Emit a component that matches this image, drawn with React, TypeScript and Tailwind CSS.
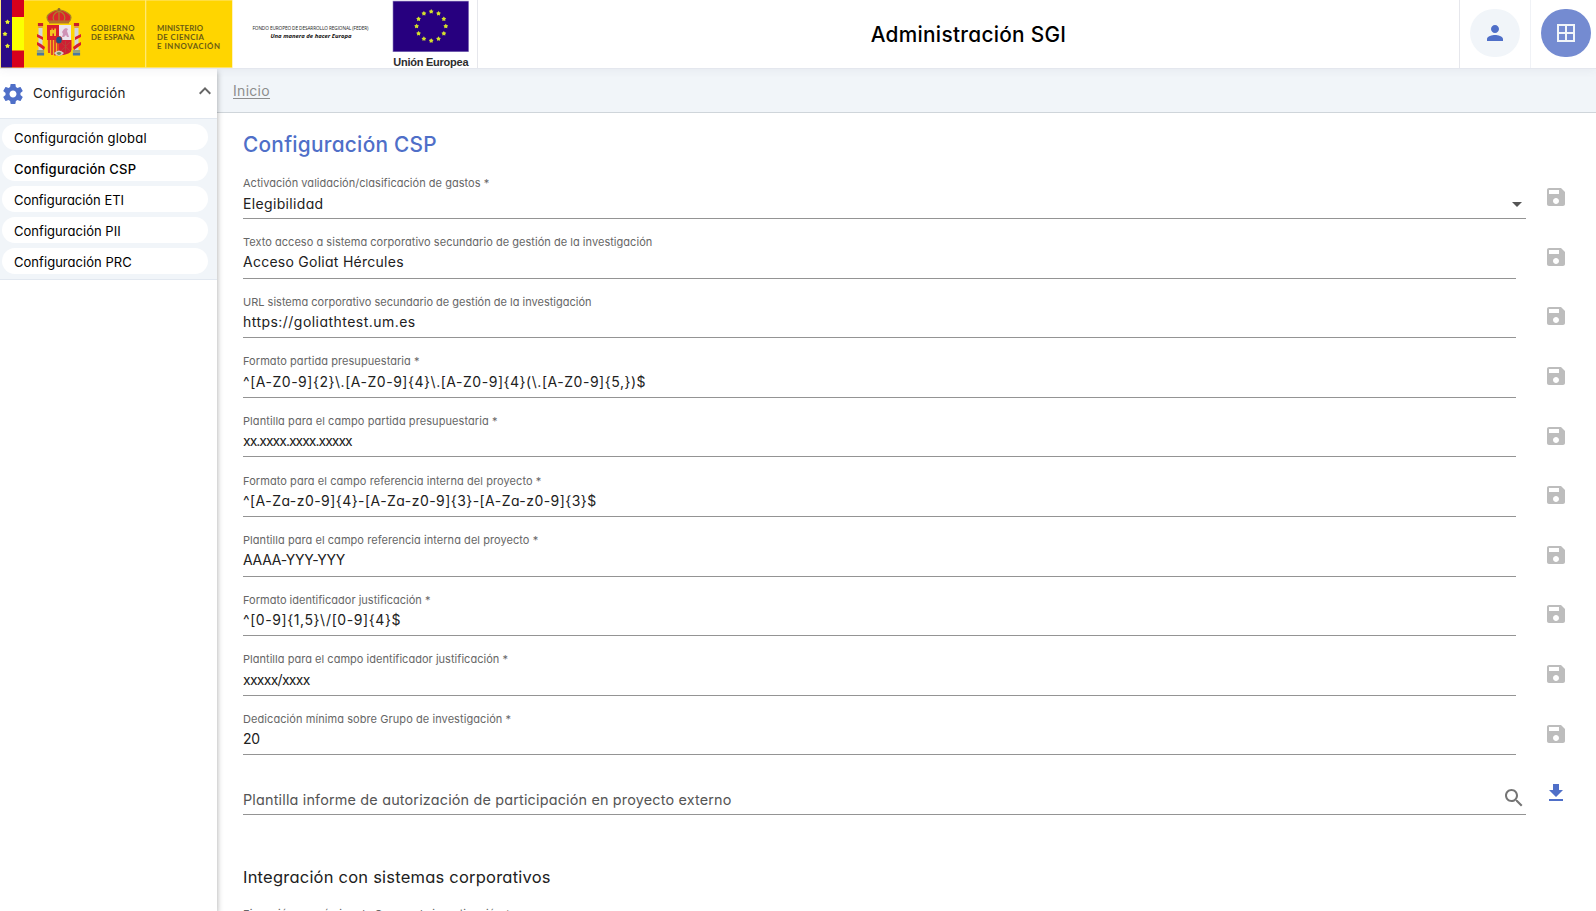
import type { ReactNode } from "react";

const PATHS = {
  settings:
    "M19.43 12.98c.04-.32.07-.64.07-.98s-.03-.66-.07-.98l2.11-1.65c.19-.15.24-.42.12-.64l-2-3.46c-.12-.22-.39-.3-.61-.22l-2.49 1c-.52-.4-1.08-.73-1.69-.98l-.38-2.65C14.46 2.18 14.25 2 14 2h-4c-.25 0-.46.18-.49.42l-.38 2.65c-.61.25-1.17.59-1.69.98l-2.49-1c-.23-.09-.49 0-.61.22l-2 3.46c-.13.22-.07.49.12.64l2.11 1.65c-.04.32-.07.65-.07.98s.03.66.07.98l-2.11 1.65c-.19.15-.24.42-.12.64l2 3.46c.12.22.39.3.61.22l2.49-1c.52.4 1.08.73 1.69.98l.38 2.65c.03.24.24.42.49.42h4c.25 0 .46-.18.49-.42l.38-2.65c.61-.25 1.17-.59 1.69-.98l2.49 1c.23.09.49 0 .61-.22l2-3.46c.12-.22.07-.49-.12-.64l-2.11-1.65zM12 15.5c-1.93 0-3.5-1.57-3.5-3.5s1.57-3.5 3.5-3.5 3.5 1.57 3.5 3.5-1.57 3.5-3.5 3.5z",
  expandLess: "M12 8l-6 6 1.41 1.41L12 10.83l4.59 4.58L18 14z",
  person:
    "M12 12c2.21 0 4-1.79 4-4s-1.79-4-4-4-4 1.79-4 4 1.79 4 4 4zm0 2c-2.67 0-8 1.34-8 4v2h16v-2c0-2.66-5.33-4-8-4z",
  borderAll:
    "M3 3v18h18V3H3zm8 16H5v-6h6v6zm0-8H5V5h6v6zm8 8h-6v-6h6v6zm0-8h-6V5h6v6z",
  save: "M17 3H5c-1.11 0-2 .9-2 2v14c0 1.1.89 2 2 2h14c1.1 0 2-.9 2-2V7l-4-4zm-5 16c-1.66 0-3-1.34-3-3s1.34-3 3-3 3 1.34 3 3-1.34 3-3 3zm3-10H5V5h10v4z",
  search:
    "M15.5 14h-.79l-.28-.27C15.41 12.59 16 11.11 16 9.5 16 5.91 13.09 3 9.5 3S3 5.91 3 9.5 5.91 16 9.5 16c1.61 0 3.09-.59 4.23-1.57l.27.28v.79l5 4.99L20.49 19l-4.99-5zm-6 0C7.01 14 5 11.99 5 9.5S7.01 5 9.5 5 14 7.01 14 9.5 11.99 14 9.5 14z",
  download: "M19 9h-4V3H9v6H5l7 7 7-7zM5 18v2h14v-2H5z",
};

function Icon({ name, className }: { name: keyof typeof PATHS; className: string }) {
  return (
    <svg viewBox="0 0 24 24" className={`size-6 shrink-0 fill-current ${className}`}>
      <path d={PATHS[name]} />
    </svg>
  );
}

function CoatOfArms() {
  return (
    <g>
      {/* pillars */}
      {[38.5, 74.5].map((x) => (
        <g key={x}>
          <rect x={x - 0.6} y="23" width="5.2" height="3" fill="#c8202a" />
          <rect x={x - 0.3} y="26" width="4.6" height="2" fill="#e8a33c" />
          <rect x={x} y="28" width="4" height="22" fill="#d3d3dc" />
          <rect x={x - 1.6} y="50" width="7.2" height="3" fill="#9aa47a" />
          <rect x={x - 1.6} y="53" width="7.2" height="2.5" fill="#4b78a0" />
        </g>
      ))}
      <path d="M37 34l6 3v3l-6-3zM37 42l4 2 4 3-1 3-7-5z" fill="#d81f2c" />
      <path d="M81 34l-6 3v3l6-3zM81 42l-4 2-4 3 1 3 7-5z" fill="#d81f2c" />
      {/* crown */}
      <path d="M49 22q-4-5 0-8 5-4 10-4t10 4q4 3 0 8z" fill="#d9262c" />
      <path d="M49 22q-4-5 0-8 5-4 10-4t10 4q4 3 0 8M54 21q-3-7 5-10M64 21q3-7-5-10M59 8v13" fill="none" stroke="#a8842a" strokeWidth="1.2" />
      <rect x="49" y="20.5" width="20" height="3" fill="#b5702c" />
      <circle cx="59" cy="9.5" r="1.5" fill="#8d6a2f" />
      {/* shield */}
      <path d="M47 25h12v15H47z" fill="#d9202c" />
      <path d="M59 25h12v15H59z" fill="#ece4ee" />
      <path d="M47 40h12v15.5q-12-1-12-6z" fill="#f3b71e" />
      <path d="M59 40h12.500v9.500q0 5-12.500 6z" fill="#cf1f33" />
      <path d="M50 36v-6h1.500v-1.500h1.200V30h1.500v-1.500H56V36h-2v-2.500h-1.500V36z" fill="#f5c51f" />
      <path d="M62 37l1-3-1-2 2-3 2-1 2 1-1 2 1 3 1 3h-2l-1-2-2 2z" fill="#cf93b6" />
      <path d="M49 40v13M52 40v15M55 40v15.500M58 40v15.500" stroke="#d9202c" strokeWidth="1.500" />
      <path d="M61 42l9 9M70 42l-9 9M65.500 41v12" stroke="#b8443a" strokeWidth=".8" />
      <path d="M54 53q5-5 10 0-2 3-5 3t-5-3z" fill="#d8cfc4" />
      <path d="M56.500 53q2.500-2 5 0-1 2-2.500 2t-2.500-2z" fill="#6d8b5a" />
      <ellipse cx="59" cy="40" rx="3.400" ry="4" fill="#c0392b" />
      <ellipse cx="59" cy="40" rx="2.700" ry="3.300" fill="#1d4f86" />
    </g>
  );
}

function Star({ x, y, r, fill }: { x: number; y: number; r: number; fill: string }) {
  const points = Array.from({ length: 10 }, (_, i) => {
    const a = (Math.PI / 5) * i - Math.PI / 2;
    const k = i % 2 ? r * 0.6 : r;
    return `${x + k * Math.cos(a)},${y + k * Math.sin(a)}`;
  }).join(" ");
  return <polygon points={points} fill={fill} />;
}

function GovernmentLogo() {
  const text = { fontFamily: "Lato, sans-serif", fontWeight: 700, fontSize: 7.8, fill: "#6b5b14" };
  return (
    <svg width="233" height="68" viewBox="0 0 233 68" className="shrink-0">
      <rect x="0" width="232.500" height="68" fill="#ffe680" />
      <rect x="1" y=".5" width="231" height="66.700" fill="#ffd500" />
      <rect x="1" y="0" width="11" height="67.500" fill="#2c0b87" />
      <rect x="12" y="0" width="12" height="67.500" fill="#d6001c" />
      <rect x="12" y="17" width="12" height="33.500" fill="#fbff00" />
      <Star x={7.5} y={22} r={2.6} fill="#e8ef30" />
      <Star x={5} y={34} r={2.6} fill="#e8ef30" />
      <Star x={7.5} y={46} r={2.6} fill="#e8ef30" />
      <rect x="145" width="1.300" height="68" fill="#ffe871" />
      <CoatOfArms />
      <g {...text}>
        <text x="91" y="31" textLength="43.500">GOBIERNO</text>
        <text x="91" y="40" textLength="43.500">DE ESPAÑA</text>
        <text x="157" y="31" textLength="46">MINISTERIO</text>
        <text x="157" y="40" textLength="47">DE CIENCIA</text>
        <text x="157" y="49" textLength="63">E INNOVACIÓN</text>
      </g>
    </svg>
  );
}

function EuropeLogo() {
  return (
    <svg width="244" height="69" viewBox="233 0 244 69" className="shrink-0">
      <text x="252.500" y="30.300" textLength="116" fontFamily="Open Sans, sans-serif" fontSize="4.700" fill="#222">
        FONDO EUROPEO DE DESARROLLO REGIONAL (FEDER)
      </text>
      <text x="270.500" y="37.500" textLength="81" fontFamily="Open Sans, sans-serif" fontSize="5.900" fontWeight="700" fontStyle="italic" fill="#111">
        Una manera de hacer Europa
      </text>
      <rect x="392.700" y=".8" width="76.100" height="51.200" fill="#8f80c0" />
      <rect x="393.300" y="1.500" width="75" height="49.800" fill="#27007f" />
      {Array.from({ length: 12 }, (_, i) => (
        <Star
          key={i}
          x={431.2 + 14.6 * Math.sin((i * Math.PI) / 6)}
          y={26.2 - 14.6 * Math.cos((i * Math.PI) / 6)}
          r={2.5}
          fill="#d3e02c"
        />
      ))}
      <text x="393.300" y="66" textLength="75.200" fontFamily="Liberation Sans, sans-serif" fontSize="11" fontWeight="700" fill="#2d2d2d">
        Unión Europea
      </text>
    </svg>
  );
}

const MENU = [
  { label: "Configuración global", style: "tracking-[0.19px]" },
  { label: "Configuración CSP", style: "font-medium tracking-[0.23px]" },
  { label: "Configuración ETI", style: "tracking-[-0.04px]" },
  { label: "Configuración PII", style: "tracking-[0.03px]" },
  { label: "Configuración PRC", style: "tracking-[0.04px]" },
];

const FIELDS = [
  { label: "Texto acceso a sistema corporativo secundario de gestión de la investigación", ls: "tracking-[0.035px]", value: "Acceso Goliat Hércules", vs: "tracking-[0.26px]" },
  { label: "URL sistema corporativo secundario de gestión de la investigación", ls: "tracking-[0.003px]", value: "https://goliathtest.um.es", vs: "tracking-[0.46px]" },
  { label: "Formato partida presupuestaria *", ls: "tracking-[0.065px]", value: "^[A-Z0-9]{2}\\.[A-Z0-9]{4}\\.[A-Z0-9]{4}(\\.[A-Z0-9]{5,})$", vs: "tracking-[0.53px]" },
  { label: "Plantilla para el campo partida presupuestaria *", ls: "tracking-[0.075px]", value: "xx.xxxx.xxxx.xxxxx", vs: "tracking-[-1px]" },
  { label: "Formato para el campo referencia interna del proyecto *", ls: "tracking-[0.075px]", value: "^[A-Za-z0-9]{4}-[A-Za-z0-9]{3}-[A-Za-z0-9]{3}$", vs: "tracking-[0.45px]" },
  { label: "Plantilla para el campo referencia interna del proyecto *", ls: "tracking-[0.055px]", value: "AAAA-YYY-YYY", vs: "tracking-[-0.28px]" },
  { label: "Formato identificador justificación *", ls: "tracking-[0.01px]", value: "^[0-9]{1,5}\\/[0-9]{4}$", vs: "tracking-[0.58px]" },
  { label: "Plantilla para el campo identificador justificación *", ls: "tracking-[0.03px]", value: "xxxxx/xxxx", vs: "tracking-[-0.72px]" },
  { label: "Dedicación mínima sobre Grupo de investigación *", ls: "tracking-[0.075px]", value: "20", vs: "tracking-[-0.2px]" },
];

function Row({ children, icon }: { children: ReactNode; icon: ReactNode }) {
  return (
    <div className="flex h-[59.6px] shrink-0 items-end">
      {children}
      <div className="mr-7 ml-auto pb-[9.7px]">{icon}</div>
    </div>
  );
}

const saveIcon = <Icon name="save" className="text-[#bdbdbd]" />;

export default function App() {
  return (
    <div className="flex h-[911px] w-full flex-col overflow-hidden bg-white font-['Inter',sans-serif] text-[#212121] [font-feature-settings:'cv11']">
      <header className="z-20 flex h-[69px] shrink-0 border-b border-[#e4e7ee] bg-white shadow-[0_2px_8px_rgba(60,60,100,0.06)]">
        <GovernmentLogo />
        <EuropeLogo />
        <div className="flex flex-1 items-center justify-center border-x border-[#e6e7ec] pt-px text-[20.8px] font-medium tracking-[0.3px] text-black">
          Administración SGI
        </div>
        <div className="flex w-[71px] justify-center border-r border-[#f0f2f6] pt-[9px]">
          <button className="flex h-12 w-[50px] items-center justify-center rounded-full bg-[#f1f5f9]">
            <Icon name="person" className="text-[#4f6fc8]" />
          </button>
        </div>
        <div className="flex w-[65px] pt-[9px] pl-2.5">
          <button className="flex h-12 w-[50px] items-center justify-center rounded-full bg-[#748bd1]">
            <Icon name="borderAll" className="text-[#f1f5f9]" />
          </button>
        </div>
      </header>

      <div className="flex min-h-0 flex-1">
        <aside className="z-10 w-[217px] shrink-0 bg-white shadow-[0_3px_6px_rgba(0,0,0,0.35)]">
          <div className="flex h-[50px] items-center border-b border-[#e2e8f0] pl-px">
            <Icon name="settings" className="text-[#4f6fc8]" />
            <span className="ml-2 pb-px text-[13.4px] tracking-[0.2px]">Configuración</span>
            <Icon name="expandLess" className="mb-1.5 ml-auto text-[#666]" />
          </div>
          <nav className="flex h-[161px] flex-col gap-[5px] border-b border-[#e2e8f0] bg-[#f1f5f9] pt-[5px] pr-[9px] pl-0.5">
            {MENU.map((item) => (
              <a key={item.label} className={`flex h-[26px] items-center rounded-full bg-white pt-[3px] pl-3 text-[13px] text-black ${item.style}`}>
                {item.label}
              </a>
            ))}
          </nav>
        </aside>

        <main className="flex min-w-0 flex-1 flex-col">
          <div className="flex h-11 shrink-0 items-center border-b border-[#cfd5da] bg-[#f1f5f9] pl-4 text-sm tracking-[0.3px] text-[#8d8d8d]">
            <a className="underline underline-offset-[1.500px]">Inicio</a>
          </div>

          <div className="flex flex-1 flex-col pl-[26px]">
            <h1 className="h-[46.400px] shrink-0 pt-[17.500px] text-[20.8px] leading-7 font-medium tracking-[0.27px] text-[#4f6fc8]">
              Configuración CSP
            </h1>

            <Row icon={saveIcon}>
              <div className="w-[1283px] border-b border-[#949494] pb-[3.500px]">
                <div className="mb-[3px] text-[11px] leading-4 tracking-[0.035px] text-[#666]">
                  Activación validación/clasificación de gastos *
                </div>
                <div className="flex items-center justify-between pr-1 text-sm leading-5 tracking-[0.34px]">
                  Elegibilidad
                  <svg viewBox="0 0 10 5" className="h-[5px] w-2.5 fill-[#555]">
                    <path d="M0 0h10L5 5z" />
                  </svg>
                </div>
              </div>
            </Row>

            {FIELDS.map((f) => (
              <Row key={f.label} icon={saveIcon}>
                <div className="w-[1273px] border-b border-[#949494] pb-[5.100px]">
                  <div className={`mb-[2.200px] text-[11px] leading-4 text-[#666] ${f.ls}`}>{f.label}</div>
                  <div className={`text-sm leading-5 ${f.vs}`}>{f.value}</div>
                </div>
              </Row>
            ))}

            <Row icon={<Icon name="download" className="text-[#4f6fc8]" />}>
              <div className="flex w-[1283px] items-end justify-between border-b border-[#949494] pb-1 text-[14.4px] leading-5 tracking-[0.175px] text-[#555]">
                Plantilla informe de autorización de participación en proyecto externo
                <Icon name="search" className="text-[#757575]" />
              </div>
            </Row>

            <h2 className="mt-[50px] text-[16.5px] leading-6 tracking-[0.22px]">Integración con sistemas corporativos</h2>
            <div className="mt-[17.500px] text-[11px] leading-4 tracking-[0.04px] whitespace-nowrap text-[#666]">
              Ejecución económica de Grupos de investigación *
            </div>
          </div>
        </main>
      </div>
    </div>
  );
}
